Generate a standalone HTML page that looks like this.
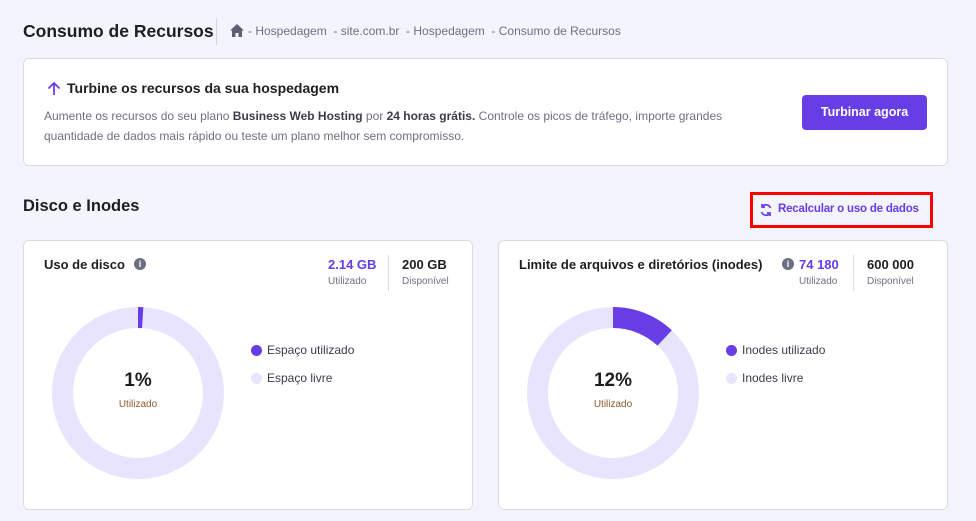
<!DOCTYPE html>
<html><head><meta charset="utf-8"><style>
*{box-sizing:border-box;margin:0;padding:0}
body{width:976px;height:521px;background:#f4f4fd;font-family:"Liberation Sans",sans-serif;color:#1d1e20;position:relative;overflow:hidden}
.a{position:absolute;white-space:nowrap}
.card{position:absolute;background:#fff;border:1px solid #dadce0;border-radius:6px}
.g{color:#6d7081}
</style></head><body>
<div class="a" style="left:23px;top:21px;font-size:17.5px;font-weight:bold">Consumo de Recursos</div>
<div class="a" style="left:216px;top:18px;width:1px;height:27px;background:#d5d5dd"></div>
<svg class="a" style="left:230px;top:24px" width="14" height="13" viewBox="0 0 14 13"><path d="M7 0L0 6.5h2V13h3.5V9h3v4H12V6.5h2z" fill="#5d606f"/></svg>
<div class="a g" style="left:248px;top:24px;font-size:12px">- Hospedagem &nbsp;- site.com.br &nbsp;- Hospedagem &nbsp;- Consumo de Recursos</div>

<div class="card" style="left:23px;top:58px;width:925px;height:108px"></div>
<svg class="a" style="left:47px;top:82px" width="14" height="14" viewBox="0 0 14 14"><path d="M7 13V1M1.5 6.5L7 1l5.5 5.5" stroke="#673de6" stroke-width="1.8" fill="none"/></svg>
<div class="a" style="left:67px;top:80px;font-size:14px;font-weight:bold">Turbine os recursos da sua hospedagem</div>
<div class="a g" style="left:44px;top:106px;font-size:12px;line-height:20px">Aumente os recursos do seu plano <b style="color:#3b3d4a">Business Web Hosting</b> por <b style="color:#3b3d4a">24 horas grátis.</b> Controle os picos de tráfego, importe grandes<br>quantidade de dados mais rápido ou teste um plano melhor sem compromisso.</div>
<div class="a" style="left:802px;top:95px;width:125px;height:35px;background:#673de6;border-radius:4px;color:#fff;font-size:12.5px;font-weight:bold;text-align:center;line-height:35px">Turbinar agora</div>

<div class="a" style="left:23px;top:197px;font-size:16.5px;font-weight:bold">Disco e Inodes</div>
<div class="a" style="left:750px;top:192px;width:183px;height:36px;border:3px solid #f00;background:#f4f4fd"></div>
<svg class="a" style="left:759px;top:203px" width="14" height="14" viewBox="0 0 14 14" fill="none" stroke="#673de6" stroke-width="1.7"><path d="M11.5 5A5 5 0 0 0 3 3.5M2.5 9A5 5 0 0 0 11 10.5"/><path d="M3 1v3h3M11 13v-3h-3"/></svg>
<div class="a" style="left:778px;top:203px;font-size:11.5px;font-weight:bold;color:#673de6;letter-spacing:-0.2px">Recalcular o uso de dados</div>

<div class="card" style="left:23px;top:240px;width:450px;height:270px"></div>
<div class="a" style="left:44px;top:257px;font-size:13px;font-weight:bold">Uso de disco</div>
<div class="a" style="left:134px;top:258px;width:12px;height:12px;border-radius:50%;background:#6d7081;color:#fff;font-size:9px;font-weight:bold;text-align:center;line-height:12px">i</div>
<div class="a" style="left:328px;top:257px;font-size:13px;font-weight:bold;color:#673de6">2.14 GB</div>
<div class="a g" style="left:328px;top:276px;font-size:10px">Utilizado</div>
<div class="a" style="left:388px;top:255px;width:1px;height:36px;background:#dadce0"></div>
<div class="a" style="left:402px;top:257px;font-size:13px;font-weight:bold">200 GB</div>
<div class="a g" style="left:402px;top:276px;font-size:10px">Disponível</div>
<svg class="a" style="left:38px;top:293px" width="200" height="200" viewBox="0 0 200 200"><circle cx="100" cy="100" r="75.5" fill="none" stroke="#e9e4fd" stroke-width="21"/><circle cx="100" cy="100" r="75.5" fill="none" stroke="#673de6" stroke-width="21" stroke-dasharray="4.7 500" transform="rotate(-90 100 100)"/></svg>
<div class="a" style="left:98px;top:370px;width:80px;text-align:center;font-size:19px;font-weight:bold">1%</div>
<div class="a" style="left:98px;top:399px;width:80px;text-align:center;font-size:10px;color:#8a5b2e">Utilizado</div>
<div class="a" style="left:251px;top:345px;width:11px;height:11px;border-radius:50%;background:#673de6"></div>
<div class="a" style="left:267px;top:343px;font-size:12px;color:#3b3d4a">Espaço utilizado</div>
<div class="a" style="left:251px;top:373px;width:11px;height:11px;border-radius:50%;background:#e9e4fd"></div>
<div class="a" style="left:267px;top:371px;font-size:12px;color:#3b3d4a">Espaço livre</div>

<div class="card" style="left:498px;top:240px;width:450px;height:270px"></div>
<div class="a" style="left:519px;top:257px;font-size:13px;font-weight:bold">Limite de arquivos e diretórios (inodes)</div>
<div class="a" style="left:782px;top:258px;width:12px;height:12px;border-radius:50%;background:#6d7081;color:#fff;font-size:9px;font-weight:bold;text-align:center;line-height:12px">i</div>
<div class="a" style="left:799px;top:257px;font-size:13px;font-weight:bold;color:#673de6">74 180</div>
<div class="a g" style="left:799px;top:276px;font-size:10px">Utilizado</div>
<div class="a" style="left:853px;top:255px;width:1px;height:36px;background:#dadce0"></div>
<div class="a" style="left:867px;top:257px;font-size:13px;font-weight:bold">600 000</div>
<div class="a g" style="left:867px;top:276px;font-size:10px">Disponível</div>
<svg class="a" style="left:513px;top:293px" width="200" height="200" viewBox="0 0 200 200"><circle cx="100" cy="100" r="75.5" fill="none" stroke="#e9e4fd" stroke-width="21"/><circle cx="100" cy="100" r="75.5" fill="none" stroke="#673de6" stroke-width="21" stroke-dasharray="56.9 500" transform="rotate(-90 100 100)"/></svg>
<div class="a" style="left:573px;top:370px;width:80px;text-align:center;font-size:19px;font-weight:bold">12%</div>
<div class="a" style="left:573px;top:399px;width:80px;text-align:center;font-size:10px;color:#8a5b2e">Utilizado</div>
<div class="a" style="left:726px;top:345px;width:11px;height:11px;border-radius:50%;background:#673de6"></div>
<div class="a" style="left:742px;top:343px;font-size:12px;color:#3b3d4a">Inodes utilizado</div>
<div class="a" style="left:726px;top:373px;width:11px;height:11px;border-radius:50%;background:#e9e4fd"></div>
<div class="a" style="left:742px;top:371px;font-size:12px;color:#3b3d4a">Inodes livre</div>
</body></html>
